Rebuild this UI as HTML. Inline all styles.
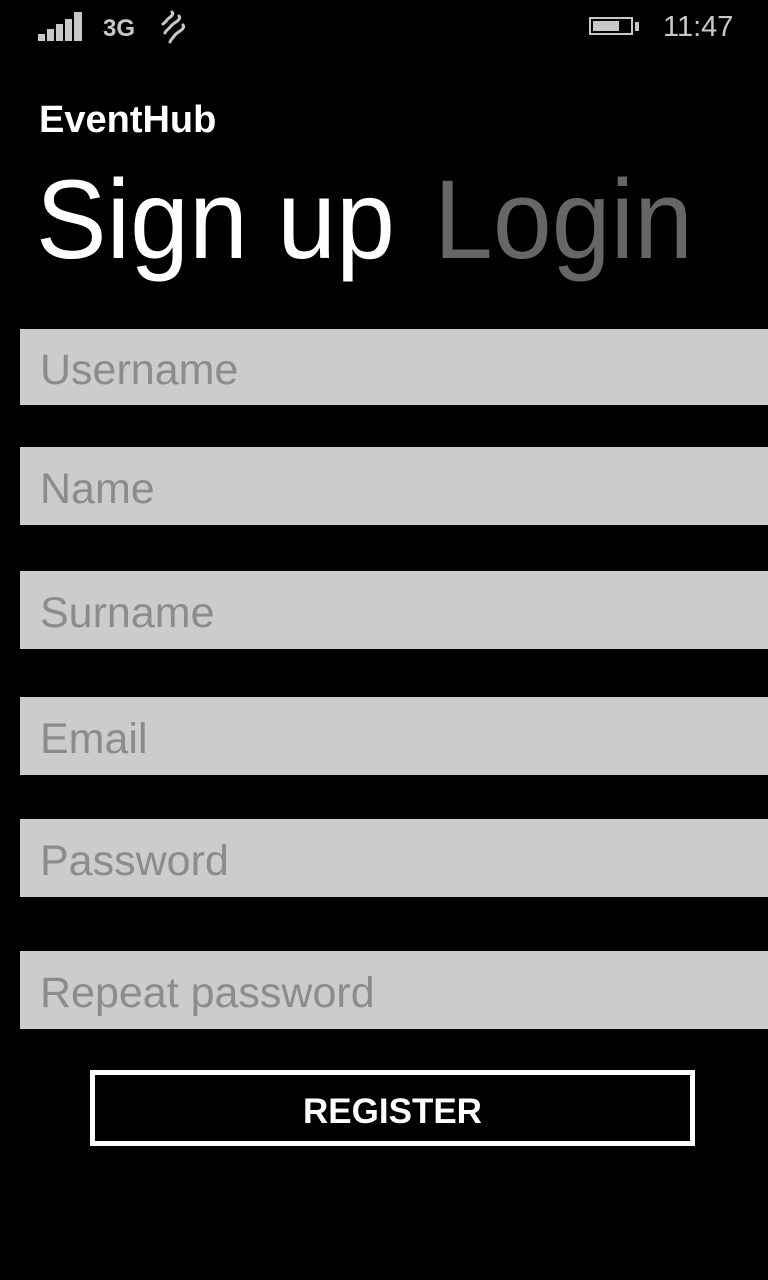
<!DOCTYPE html>
<html><head><meta charset="utf-8"><style>
html,body{margin:0;padding:0;background:#000;width:768px;height:1280px;overflow:hidden;font-family:"Liberation Sans",sans-serif}
.a{position:absolute;line-height:1;white-space:nowrap}
.f{position:absolute;left:20px;width:748px;height:78px;background:#cccccc}
.f span{position:absolute;left:20px;top:21px;font-size:43px;line-height:1;color:#8c8c8c;white-space:nowrap}
</style></head><body>
<svg class="a" style="left:38px;top:10px" width="50" height="32" viewBox="0 0 50 32">
<rect x="0" y="24" width="7" height="7" fill="#c8c8c8"/>
<rect x="9" y="19" width="7" height="12" fill="#c8c8c8"/>
<rect x="18" y="14" width="7" height="17" fill="#c8c8c8"/>
<rect x="27" y="9" width="7" height="22" fill="#c8c8c8"/>
<rect x="36" y="2" width="8" height="29" fill="#c8c8c8"/>
</svg>
<div class="a" style="left:103px;top:17px;font-size:24px;font-weight:bold;color:#c8c8c8">3G</div>
<svg class="a" style="left:158px;top:10px" width="30" height="34" viewBox="0 0 30 34" fill="none" stroke="#c8c8c8" stroke-width="3" stroke-linecap="round">
<path d="M14 2 C17 5,10 8,9 10 C8 12,6 13,5 14"/>
<path d="M21 6 C24 10,15 13,13 16 C11 19,8 20,7 23"/>
<path d="M25 15 C28 19,19 22,17 25 C15 28,13 29,12 32"/>
</svg>
<div class="a" style="left:589px;top:17px;width:44px;height:18px;border:2px solid #c8c8c8;box-sizing:border-box"></div>
<div class="a" style="left:593px;top:21px;width:26px;height:10px;background:#c8c8c8"></div>
<div class="a" style="left:635px;top:22px;width:4px;height:9px;background:#c8c8c8"></div>
<div class="a" style="left:663px;top:13px;font-size:29px;color:#c8c8c8">11:47</div>

<div class="a" style="left:39px;top:101px;font-size:38px;font-weight:bold;color:#fff">EventHub</div>
<div class="a" style="left:36px;top:164px;font-size:112px;color:#fff;transform:scaleX(0.945);transform-origin:0 0">Sign up</div>
<div class="a" style="left:434px;top:164px;font-size:112px;color:#666;transform:scaleX(0.945);transform-origin:0 0">Login</div>

<div class="f" style="top:329px;height:76px"><span style="top:20px">Username</span></div>
<div class="f" style="top:447px"><span>Name</span></div>
<div class="f" style="top:571px"><span>Surname</span></div>
<div class="f" style="top:697px"><span>Email</span></div>
<div class="f" style="top:819px"><span>Password</span></div>
<div class="f" style="top:951px"><span>Repeat password</span></div>

<div class="a" style="left:90px;top:1070px;width:605px;height:76px;border:5px solid #fff;box-sizing:border-box"></div>
<div class="a" style="left:90px;width:605px;text-align:center;top:1094px;font-size:35px;font-weight:bold;color:#fff">REGISTER</div>
</body></html>
